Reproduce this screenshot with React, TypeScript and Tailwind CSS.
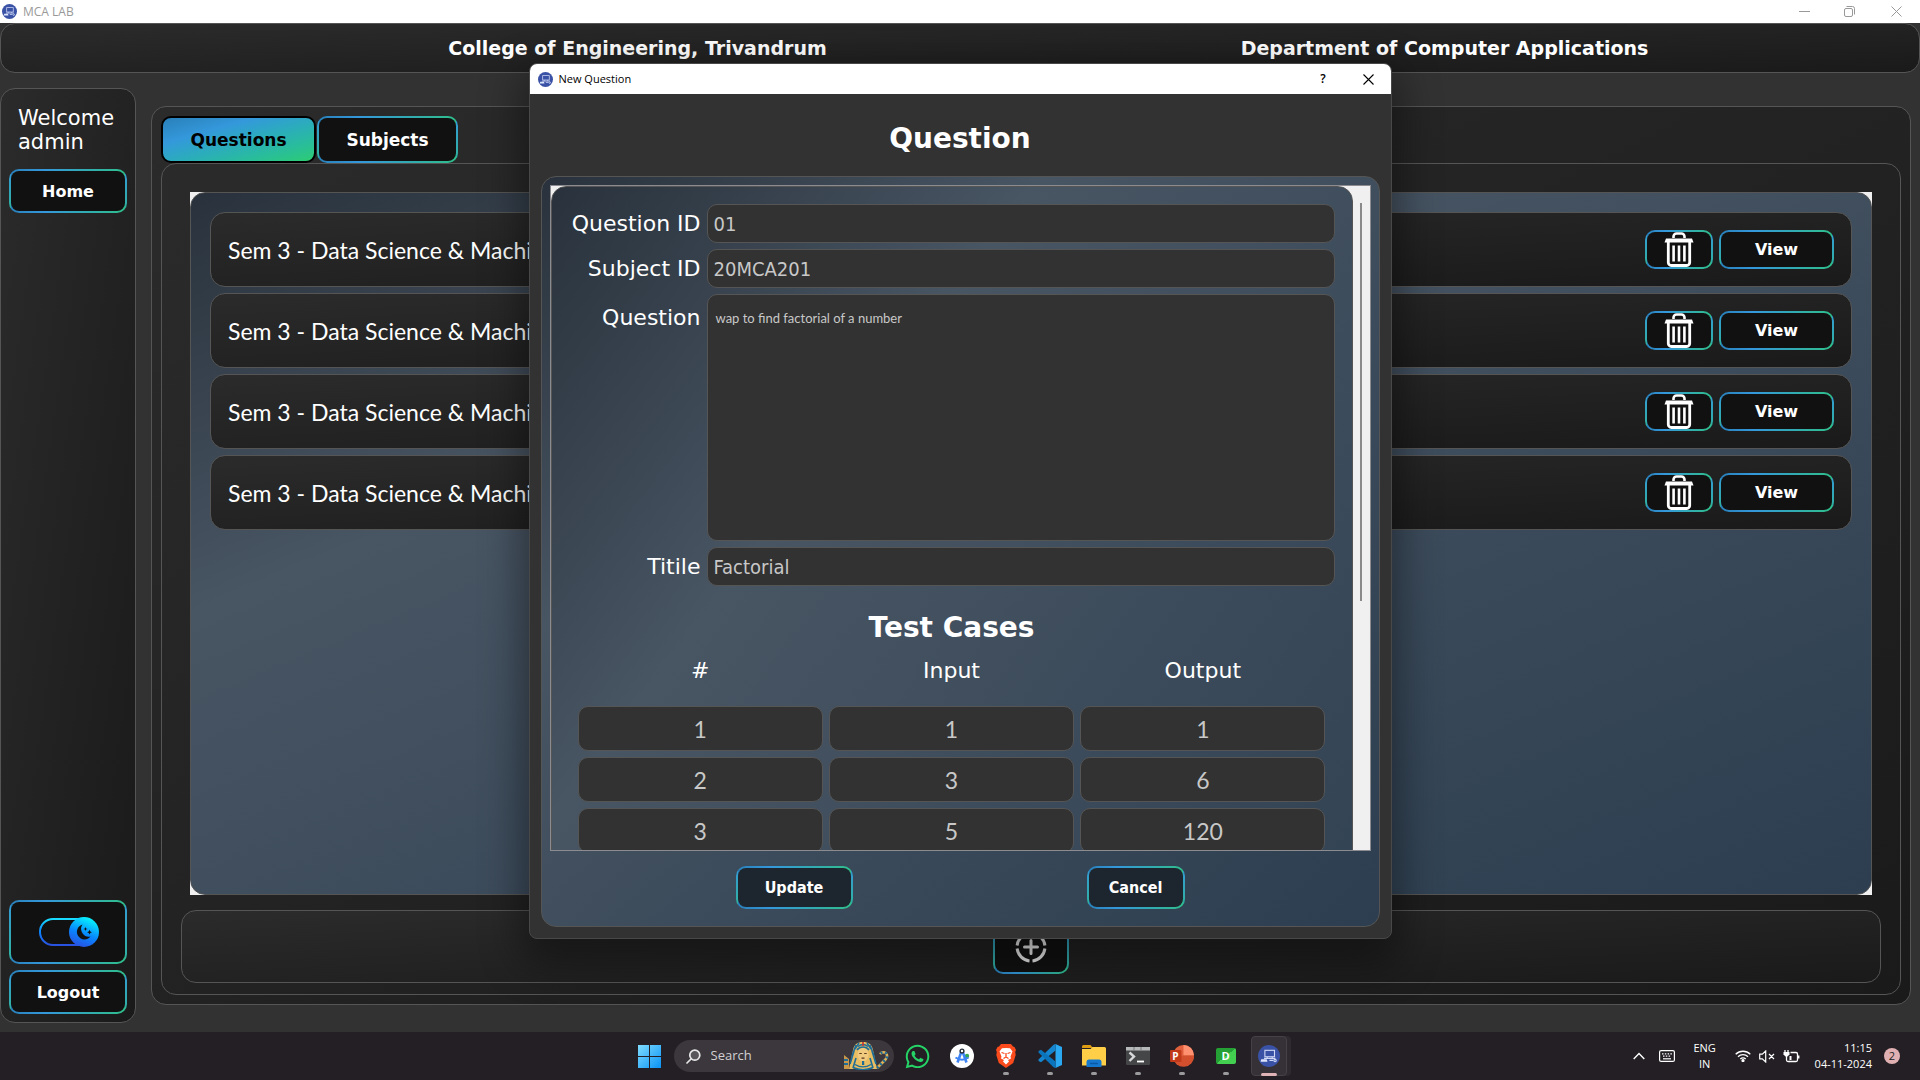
import React from "react";
import { FaWhatsapp } from "react-icons/fa";

const ui = "font-['DejaVu_Sans','Noto_Sans',sans-serif]";
const segoe = "font-['Open_Sans','Noto_Sans',sans-serif]";
const narrow = "font-['Lato','Liberation_Sans',sans-serif]";
const tahoma = "font-['DejaVu_Sans_Condensed','DejaVu_Sans',sans-serif]";

const darkPanel =
  "rounded-[15px] border border-[#555] bg-linear-to-br from-[#2b2b2b] to-[#1a1a1a]";
const bluePanel =
  "border border-[#555] bg-linear-to-br from-[#29323c] via-[#485563] via-30% to-[#2c3e50]";
const glowDark =
  "rounded-[10px] border-2 border-transparent text-white [background:linear-gradient(#111,#111)_padding-box,linear-gradient(#3498db,#2fb59a)_left/2px_100%_no-repeat_border-box,linear-gradient(#3498db,#2fb59a)_right/2px_100%_no-repeat_border-box,linear-gradient(90deg,#2980b9,#3498db_30%,#2fbf8a)_border-box]";
const glowBlue =
  "rounded-[10px] border-2 border-transparent text-white [background:linear-gradient(#1d262e,#1d262e)_padding-box,linear-gradient(#3498db,#2fb59a)_left/2px_100%_no-repeat_border-box,linear-gradient(#3498db,#2fb59a)_right/2px_100%_no-repeat_border-box,linear-gradient(90deg,#2980b9,#3498db_30%,#2fbf8a)_border-box]";
const field =
  "w-full min-w-0 rounded-[10px] border border-[#555] bg-[#323232] text-[#c8c8c8] outline-none";

function LabLogo({ size }: { size: number }) {
  return (
    <svg width={size} height={size} viewBox="0 0 24 24" aria-hidden="true">
      <circle cx="12" cy="12" r="12" fill="#3a52a6" />
      <g fill="none" stroke="#cfd8f5" strokeWidth="1.2">
        <rect x="7.5" y="5.8" width="10.5" height="7" />
        <path d="M6.5 14.6h12.5M10 14.5v-1.5M15.5 14.5v-1.5M12.5 16.8h4" />
        <circle cx="18.6" cy="17" r="1.3" />
      </g>
      <path d="M3.5 15.6h6l.8 2.6H2.8z" fill="#dfe6fb" />
    </svg>
  );
}

function TrashIcon() {
  return (
    <svg width="30" height="35" viewBox="0 0 30 35" fill="none" stroke="#fff" aria-hidden="true">
      <path d="M9.5 6V4.5a3 3 0 0 1 3-3h5a3 3 0 0 1 3 3V6" strokeWidth="2.6" />
      <path d="M2 6.5h26l1.5 4H.5z" fill="#fff" stroke="none" />
      <path d="M4.3 10v20.5a3 3 0 0 0 3 3h15.4a3 3 0 0 0 3-3V10" strokeWidth="2.8" />
      <path d="M9.6 13.5v16M15 13.5v16M20.4 13.5v16" strokeWidth="2.6" />
    </svg>
  );
}

function QuestionRow() {
  return (
    <li className={`flex h-[75px] items-center gap-1.5 px-[17px] ${darkPanel}`}>
      <span className={`flex-1 pt-0.5 text-[23px] whitespace-nowrap text-white ${narrow}`}>
        Sem 3 - Data Science &amp; Machi
      </span>
      <button
        type="button"
        aria-label="Delete"
        className={`flex h-[39px] w-[68px] items-center justify-center ${glowDark}`}
      >
        <TrashIcon />
      </button>
      <button type="button" className={`h-[39px] w-[115px] text-base font-bold ${glowDark}`}>
        View
      </button>
    </li>
  );
}

function ThemeToggleIcon() {
  return (
    <svg width="60" height="30" viewBox="0 0 60 30" aria-hidden="true">
      <defs>
        <linearGradient id="ring" x1="0" y1="0" x2="0" y2="1">
          <stop offset="0" stopColor="#19dcff" />
          <stop offset=".5" stopColor="#0a84ff" />
          <stop offset="1" stopColor="#2a52e0" />
        </linearGradient>
        <linearGradient id="knob" x1=".7" y1="0" x2=".3" y2="1">
          <stop offset="0" stopColor="#08fbff" />
          <stop offset=".55" stopColor="#0788ff" />
          <stop offset="1" stopColor="#2a4fe0" />
        </linearGradient>
      </defs>
      <rect x="1" y="2" width="56" height="26" rx="13" fill="none" stroke="url(#ring)" strokeWidth="2" />
      <circle cx="45" cy="15" r="15" fill="url(#knob)" />
      <path d="M43.500 7.500a7.600 7.600 0 1 0 8 12A7.800 7.800 0 0 1 43.500 7.500z" fill="#111" />
      <path d="M46.500 10l.6 1.400 1.400.6-1.400.6-.6 1.400-.6-1.400-1.400-.6 1.400-.6zM50.500 12.800l.8 1.600 1.600.8-1.600.8-.8 1.600-.8-1.600-1.600-.8 1.600-.8z" fill="#111" />
    </svg>
  );
}

const cases = [
  ["1", "1", "1"],
  ["2", "3", "6"],
  ["3", "5", "120"],
];

function QuestionDialog() {
  return (
    <div
      role="dialog"
      aria-label="New Question"
      className="flex w-[863px] flex-col overflow-hidden rounded-lg border border-[#484848] bg-[#323232] shadow-[0_16px_40px_8px_rgba(0,0,0,0.4)]"
    >
      <div className={`flex h-[30px] items-center bg-white pl-2 text-black ${segoe}`}>
        <LabLogo size={15} />
        <span className="ml-1.5 flex-1 text-[11px]">New Question</span>
        <button type="button" aria-label="Help" className="w-[45px] text-xs font-semibold">
          ?
        </button>
        <button type="button" aria-label="Close" className="flex w-[45px] justify-center">
          <svg width="11" height="11" viewBox="0 0 11 11" stroke="#000" strokeWidth="1.1">
            <path d="M.5.5l10 10M10.5.5l-10 10" />
          </svg>
        </button>
      </div>
      <div className="flex flex-col px-[11px] pb-[11px]">
        <h1 className="flex h-[82px] items-center justify-center pt-2 text-[28px] font-bold text-white">
          Question
        </h1>
        <form className={`flex flex-col rounded-[15px] p-2 ${bluePanel}`}>
          <div className="flex h-[666px] overflow-hidden border border-[#8c8c90] bg-[#f0f0f0]">
            <div className={`min-h-[1051px] flex-1 self-start rounded-[15px] p-[17px] ${bluePanel}`}>
              <div className="grid grid-cols-[132px_1fr] gap-x-1.5 gap-y-1.5 text-[22px] text-white">
                <label htmlFor="qid" className="text-right leading-[39px] whitespace-nowrap">
                  Question ID
                </label>
                <input id="qid" defaultValue="01" className={`h-[39px] px-1.5 text-xl ${field} ${tahoma}`} />
                <label htmlFor="sid" className="text-right leading-[39px]">
                  Subject ID
                </label>
                <input id="sid" defaultValue="20MCA201" className={`h-[39px] px-1.5 text-xl ${field} ${tahoma}`} />
                <label htmlFor="body" className="text-right leading-[47px]">
                  Question
                </label>
                <textarea
                  id="body"
                  defaultValue="wap to find factorial of a number"
                  className={`h-[247px] resize-none px-2 py-[11px] text-[13px] leading-6 ${field} ${narrow}`}
                />
                <label htmlFor="title" className="text-right leading-[39px]">
                  Titile
                </label>
                <input id="title" defaultValue="Factorial" className={`h-[39px] px-1.5 text-xl ${field} ${tahoma}`} />
              </div>
              <h2 className="mt-6 text-center text-[28px] leading-9 font-bold text-white">Test Cases</h2>
              <table className="block px-[9px]">
                <thead className="block">
                  <tr className="grid grid-cols-3 gap-1.5 pb-2.5 text-[22px] leading-[50px] text-white">
                    <th className="font-normal">#</th>
                    <th className="font-normal">Input</th>
                    <th className="font-normal">Output</th>
                  </tr>
                </thead>
                <tbody className="flex flex-col gap-1.5">
                  {cases.map((row) => (
                    <tr key={row[0]} className="grid grid-cols-3 gap-1.5">
                      {row.map((value, i) => (
                        <td key={i} className="flex">
                          <input
                            aria-label={["Number", "Input", "Output"][i]}
                            defaultValue={value}
                            className={`h-[45px] text-center text-[23px] ${field} ${narrow}`}
                          />
                        </td>
                      ))}
                    </tr>
                  ))}
                </tbody>
              </table>
            </div>
            <div className="flex w-[17px] justify-center py-[17px]">
              <div className="h-[398px] w-0.5 bg-[#8a8a8a]" />
            </div>
          </div>
          <div className={`flex justify-between px-[186px] pt-[15px] pb-[9px] text-base font-bold ${tahoma}`}>
            <button type="button" className={`h-[43px] w-[117px] ${glowBlue}`}>
              Update
            </button>
            <button type="button" className={`h-[43px] w-[98px] ${glowBlue}`}>
              Cancel
            </button>
          </div>
        </form>
      </div>
    </div>
  );
}

function TaskIcon({ label, running, children }: { label: string; running?: boolean; children: React.ReactNode }) {
  return (
    <button type="button" aria-label={label} className="relative flex h-12 w-11 items-center justify-center">
      {children}
      {running && <span className="absolute bottom-[5px] h-[3px] w-1.5 rounded-full bg-[#9b9a9c]" />}
    </button>
  );
}

function Taskbar() {
  return (
    <footer className={`grid h-12 grid-cols-[1fr_auto_1fr] items-center bg-[#231f24] text-white ${segoe}`}>
      <div />
      <div className="flex items-center pl-1">
        <button type="button" aria-label="Start">
          <svg width="23" height="23" viewBox="0 0 23 23">
            <defs>
              <linearGradient id="win" x1="0" y1="0" x2="1" y2="1">
                <stop offset="0" stopColor="#7fdcff" />
                <stop offset="1" stopColor="#0a93f5" />
              </linearGradient>
            </defs>
            <path d="M0 0h11v11H0zM12 0h11v11H12zM0 12h11v11H0zM12 12h11v11H12z" fill="url(#win)" />
          </svg>
        </button>
        <div className="ml-[13px] flex h-8 w-[220px] items-center rounded-full bg-[#3b373c] pl-3">
          <svg width="15" height="15" viewBox="0 0 15 15" fill="none" stroke="#e8e8e8" strokeWidth="1.7" aria-hidden="true">
            <circle cx="8.8" cy="6.2" r="5" fill="#5a575c" />
            <path d="M5 10L1 14" strokeLinecap="round" />
          </svg>
          <input
            aria-label="Search"
            placeholder="Search"
            className="ml-2.5 w-[110px] bg-transparent text-[13px] outline-none placeholder:text-[#d2d0d3]"
          />
          <svg width="46" height="28" viewBox="0 0 46 28" className="ml-auto mr-1" aria-hidden="true">
            <path d="M0 13l5 4v10H0z" fill="#c9974a" />
            <path d="M0 18h4M0 22h4" stroke="#1f6f9a" strokeWidth="2" />
            <path d="M9 8C10 2 14 0 19 0s9 2 10 8l4 19H5z" fill="#e9bd62" />
            <path d="M12 3l-4 11M10 9L6 22M26 3l4 11M28 9l4 13M12 16l-3 10M26 16l3 10M15 1l-4 6M23 1l4 6" stroke="#1d6d98" strokeWidth="1.6" />
            <ellipse cx="19" cy="12.500" rx="5.500" ry="7" fill="#f0ca7e" />
            <path d="M13 8c3-4 9-4 12 0M14 4.500c3-2.500 7-2.500 10 0" stroke="#1d6d98" strokeWidth="1.500" fill="none" />
            <path d="M15.300 11.500h2.500M20.200 11.500h2.500M17.500 16.200h3" stroke="#5a3b1c" strokeWidth="1.200" />
            <path d="M18 19h2.200v4H18z" fill="#1d6d98" />
            <path d="M19 0v4" stroke="#c33" strokeWidth="1.600" />
            <path d="M11 22.500c5 3 11 3 16 0M9 25.500c6 2.500 14 2.500 20 0" stroke="#1d6d98" strokeWidth="1.400" fill="none" />
            <path d="M33 26l8.500-8.500c4.500-4.500-1.500-10-5.500-5.500" stroke="#e0b055" strokeWidth="2.600" fill="none" />
            <path d="M33 26l8.500-8.500c4.500-4.500-1.500-10-5.500-5.500" stroke="#1d6d98" strokeWidth="2.600" strokeDasharray="2 2.500" fill="none" />
          </svg>
        </div>
        <div className="ml-0.5 flex items-center">
          <TaskIcon label="WhatsApp">
            <FaWhatsapp size={27} color="#25d366" />
          </TaskIcon>
          <TaskIcon label="Android Studio">
            <svg width="24" height="24" viewBox="0 0 24 24">
              <circle cx="12" cy="12" r="12" fill="#fff" />
              <circle cx="17" cy="12" r="2.200" fill="#35a853" />
              <path d="M12 6L7.500 18.500M12 6l4.500 12.500" stroke="#3f84f4" strokeWidth="2.600" />
              <path d="M5.500 13.500c4 2.800 9 2.800 13 0" stroke="#3f84f4" strokeWidth="2" fill="none" />
              <circle cx="12" cy="7" r="1.900" fill="#fff" stroke="#222a35" strokeWidth="1.400" />
            </svg>
          </TaskIcon>
          <TaskIcon label="Brave" running>
            <svg width="20" height="24" viewBox="0 0 20 24">
              <path d="M5 0h10l2 2.500 1.500.5L20 6l-.8 2 .5 3-2.500 8L10 24l-7.200-5L.3 11l.5-3L0 6l1.500-3L3 2.500z" fill="#fb4a1c" />
              <path d="M10 4l4 .2 2.500 3.300-2 5 .5 2-3 1.500 1 1.500L10 20.500 7 17.500 8 16l-3-1.500.5-2-2-5L6 4.200z" fill="#fff" />
              <path d="M5.500 8.500l3 1M14.500 8.500l-3 1M10 9v4M7.500 14.500l2.500-1.500 2.500 1.500" stroke="#fb4a1c" strokeWidth="1.300" fill="none" />
            </svg>
          </TaskIcon>
          <TaskIcon label="Visual Studio Code" running>
            <svg width="24" height="24" viewBox="0 0 24 24">
              <path d="M17.500 0L24 3v18l-6.500 3z" fill="#2aa8f2" />
              <path d="M17.500 6.500L3 18.300.5 17v-1.500L15.500.8 17.500 0z" fill="#1585cf" />
              <path d="M17.500 17.500L3 5.700.5 7v1.500L15.500 23.200l2 .8z" fill="#0a74bd" />
            </svg>
          </TaskIcon>
          <TaskIcon label="File Explorer" running>
            <svg width="24" height="22" viewBox="0 0 24 22">
              <path d="M0 1.500Q0 0 1.500 0h7l2.500 3h-11z" fill="#dd9c12" />
              <path d="M0 4h8.500l2-2H22.500Q24 2 24 3.500v17H0z" fill="#ffcf48" />
              <path d="M4.500 22v-5a2.500 2.500 0 0 1 2.500-2.500h10a2.500 2.500 0 0 1 2.500 2.500v5z" fill="#1478cf" />
              <path d="M8 18.500h8" stroke="#0b58a5" strokeWidth="1.500" />
            </svg>
          </TaskIcon>
          <TaskIcon label="Terminal" running>
            <svg width="24" height="18" viewBox="0 0 24 18">
              <rect width="24" height="18" rx="1" fill="#454647" />
              <path d="M0 0h24v3.500H0z" fill="#b7b8ba" />
              <path d="M8 0v3.500M15 0v3.500" stroke="#77797c" />
              <path d="M3.500 5.500l4.500 4-4.500 4.500" stroke="#d7d8da" strokeWidth="2.400" fill="none" />
              <path d="M11 14.500h7" stroke="#fff" strokeWidth="1.800" />
            </svg>
          </TaskIcon>
          <TaskIcon label="PowerPoint" running>
            <span className="relative flex size-6 items-center">
              <svg width="24" height="24" viewBox="0 0 24 24">
                <circle cx="13.500" cy="11.500" r="10.500" fill="#e0603d" />
                <path d="M13.500 1a10.500 10.500 0 0 1 10.500 10.500H13.500z" fill="#ff9070" />
                <path d="M3 13a10.500 10.500 0 0 0 21-1.500H13.500z" fill="#d2502e" />
                <rect x="0" y="6" width="11.500" height="12" rx="1" fill="#c13b1b" />
              </svg>
              <span className="absolute left-0.5 w-2 text-center text-[10px] font-bold">P</span>
            </span>
          </TaskIcon>
          <TaskIcon label="Dashboard" running>
            <span className="flex h-4 w-5 items-center justify-center rounded-[2px] bg-linear-to-br from-[#25a035] from-50% to-[#43cf50] to-50% text-[11px] font-bold">
              D
            </span>
          </TaskIcon>
          <button
            type="button"
            aria-label="MCA Lab"
            className="relative ml-[3px] flex h-10 w-9 items-center justify-center rounded-[4px] border border-[#454146] bg-[#353136] shadow-[4px_0_0_#2e2a2f]"
          >
            <LabLogo size={22} />
            <span className="absolute -bottom-px h-[3px] w-4 rounded-full bg-[#e0b3b6]" />
          </button>
        </div>
      </div>
      <div className="flex items-center justify-end pr-5 text-[11px]">
        <svg width="12" height="8" viewBox="0 0 12 8" fill="none" stroke="#fff" strokeWidth="1.400" aria-hidden="true">
          <path d="M.7 7L6 1.500 11.300 7" />
        </svg>
        <svg width="16" height="12" viewBox="0 0 16 12" fill="none" stroke="#fff" className="ml-3.5" aria-hidden="true">
          <rect x=".6" y=".6" width="14.800" height="10.800" rx="1.500" strokeWidth="1.200" />
          <path d="M3 3.800h10M4 6.200h8" strokeDasharray="1.500 1.300" strokeWidth="1.300" />
          <path d="M4 8.800h8" strokeWidth="1.200" />
        </svg>
        <div className="ml-[18px] w-6 text-center leading-4">
          ENG
          <br />
          IN
        </div>
        <svg width="16" height="12" viewBox="0 0 16 12" fill="none" stroke="#fff" strokeWidth="1.300" className="ml-[18px]" aria-hidden="true">
          <path d="M.7 4.300a10.300 10.300 0 0 1 14.600 0M3 6.700a7 7 0 0 1 10 0M5.300 9a3.800 3.800 0 0 1 5.400 0" />
          <circle cx="8" cy="10.600" r="1" fill="#fff" />
        </svg>
        <svg width="16" height="13" viewBox="0 0 16 13" fill="none" stroke="#fff" strokeWidth="1.200" className="ml-2" aria-hidden="true">
          <path d="M.7 4.200h2.600L6.700 1v11L3.300 8.800H.7zM10 4l5 5M15 4l-5 5" />
        </svg>
        <svg width="17" height="13" viewBox="0 0 17 13" fill="none" stroke="#fff" strokeWidth="1.300" className="ml-2" aria-hidden="true">
          <path d="M7.500 2.500H13a1.500 1.500 0 0 1 1.500 1.500v6A1.500 1.500 0 0 1 13 11.500H6M15.800 5.500v3M2 0v2M5 0v2" />
          <path d="M.5 2h6v2.500L4.500 6.500h-2L.5 4.500z" fill="#fff" stroke="none" />
          <path d="M3.500 6v4a1.500 1.500 0 0 0 1.500 1.500h1.500" />
          <path d="M6.500 6h2v4h-2z" fill="#fff" stroke="none" />
        </svg>
        <div className="ml-[15px] text-right leading-4">
          11:15
          <br />
          04-11-2024
        </div>
        <span className="ml-3 flex size-4 items-center justify-center rounded-full bg-[#e0b0b3] text-[#222]">2</span>
      </div>
    </footer>
  );
}

export default function App() {
  return (
    <div className={`relative flex h-screen flex-col overflow-hidden bg-[#323232] ${ui}`}>
      <div className={`flex h-[23px] shrink-0 items-center bg-white pl-0.5 text-xs text-[#999] ${segoe}`}>
        <LabLogo size={15} />
        <span className="ml-1.5 flex-1">MCA LAB</span>
        <div className="flex">
          <button type="button" aria-label="Minimize" className="flex w-[45px] items-center justify-center">
            <svg width="11" height="11" viewBox="0 0 11 11" stroke="#999">
              <path d="M0 5.500h11" />
            </svg>
          </button>
          <button type="button" aria-label="Restore" className="flex w-[45px] items-center justify-center">
            <svg width="11" height="11" viewBox="0 0 11 11" stroke="#999" fill="none">
              <rect x=".5" y="2.500" width="8" height="8" rx="1.500" />
              <path d="M2.500 .5h6a2 2 0 0 1 2 2v6" />
            </svg>
          </button>
          <button type="button" aria-label="Close window" className="flex w-[48px] items-center justify-center">
            <svg width="11" height="11" viewBox="0 0 11 11" stroke="#999">
              <path d="M.5.5l10 10M10.5.5l-10 10" />
            </svg>
          </button>
        </div>
      </div>

      <header
        className={`grid h-[50px] shrink-0 grid-cols-2 items-center pr-[71px] pl-[233px] text-center text-[19px] font-bold text-white ${darkPanel}`}
      >
        <span>College of Engineering, Trivandrum</span>
        <span>Department of Computer Applications</span>
      </header>

      <div className="flex min-h-0 flex-1 gap-[15px] pt-[15px] pr-[9px] pb-[9px]">
        <aside className={`flex w-[136px] shrink-0 flex-col gap-1.5 px-2 pt-[17px] pb-2 ${darkPanel}`}>
          <p className="mb-[9px] pl-[9px] text-[21px] leading-6 text-white">
            Welcome
            <br />
            admin
          </p>
          <button type="button" className={`h-11 pt-0.5 text-base font-bold ${glowDark}`}>
            Home
          </button>
          <button
            type="button"
            role="switch"
            aria-checked="true"
            aria-label="Dark mode"
            className={`mt-auto flex h-16 items-center justify-center pl-0.5 ${glowDark}`}
          >
            <ThemeToggleIcon />
          </button>
          <button type="button" className={`h-11 pt-0.5 text-base font-bold ${glowDark}`}>
            Logout
          </button>
        </aside>

        <main className={`my-[18px] flex min-w-0 flex-1 flex-col p-[9px] ${darkPanel}`}>
          <div role="tablist" className="flex gap-px text-[17px] font-bold">
            <button
              type="button"
              role="tab"
              aria-selected="true"
              className="h-[47px] w-[155px] rounded-[10px] border-2 border-black bg-linear-to-br from-[#2980b9] via-[#3498db] via-30% to-[#2ecc71] pt-0.5 text-black"
            >
              Questions
            </button>
            <button type="button" role="tab" aria-selected="false" className={`h-[47px] w-[141px] pt-0.5 ${glowDark}`}>
              Subjects
            </button>
          </div>
          <section className="flex min-h-0 flex-1 flex-col gap-[15px] rounded-[15px] border border-[#555] px-[19px] pt-7 pb-[11px]">
            <div className="mx-[9px] flex min-h-0 flex-1 bg-[#f0f0f0]">
              <ul className={`flex flex-1 flex-col gap-1.5 rounded-[15px] p-[19px] ${bluePanel}`}>
                <QuestionRow />
                <QuestionRow />
                <QuestionRow />
                <QuestionRow />
              </ul>
            </div>
            <div className={`flex h-[73px] shrink-0 items-center justify-center ${darkPanel}`}>
              <button
                type="button"
                aria-label="Add question"
                className={`flex h-[55px] w-[76px] items-center justify-center ${glowDark}`}
              >
                <svg width="32" height="32" viewBox="0 0 32 32" fill="none" stroke="#e8e8e8" strokeWidth="3" aria-hidden="true">
                  <path d="M17.500 2.100A14 14 0 0 1 29.900 14.500M29.900 17.500A14 14 0 0 1 17.500 29.900M14.500 29.900A14 14 0 0 1 2.100 17.500M2.100 14.500A14 14 0 0 1 14.500 2.100" />
                  <path d="M16 9.500v13M9.500 16h13" strokeLinecap="round" />
                </svg>
              </button>
            </div>
          </section>
        </main>
      </div>

      <Taskbar />

      <div className="absolute inset-x-0 top-[63px] flex justify-center">
        <QuestionDialog />
      </div>
    </div>
  );
}
